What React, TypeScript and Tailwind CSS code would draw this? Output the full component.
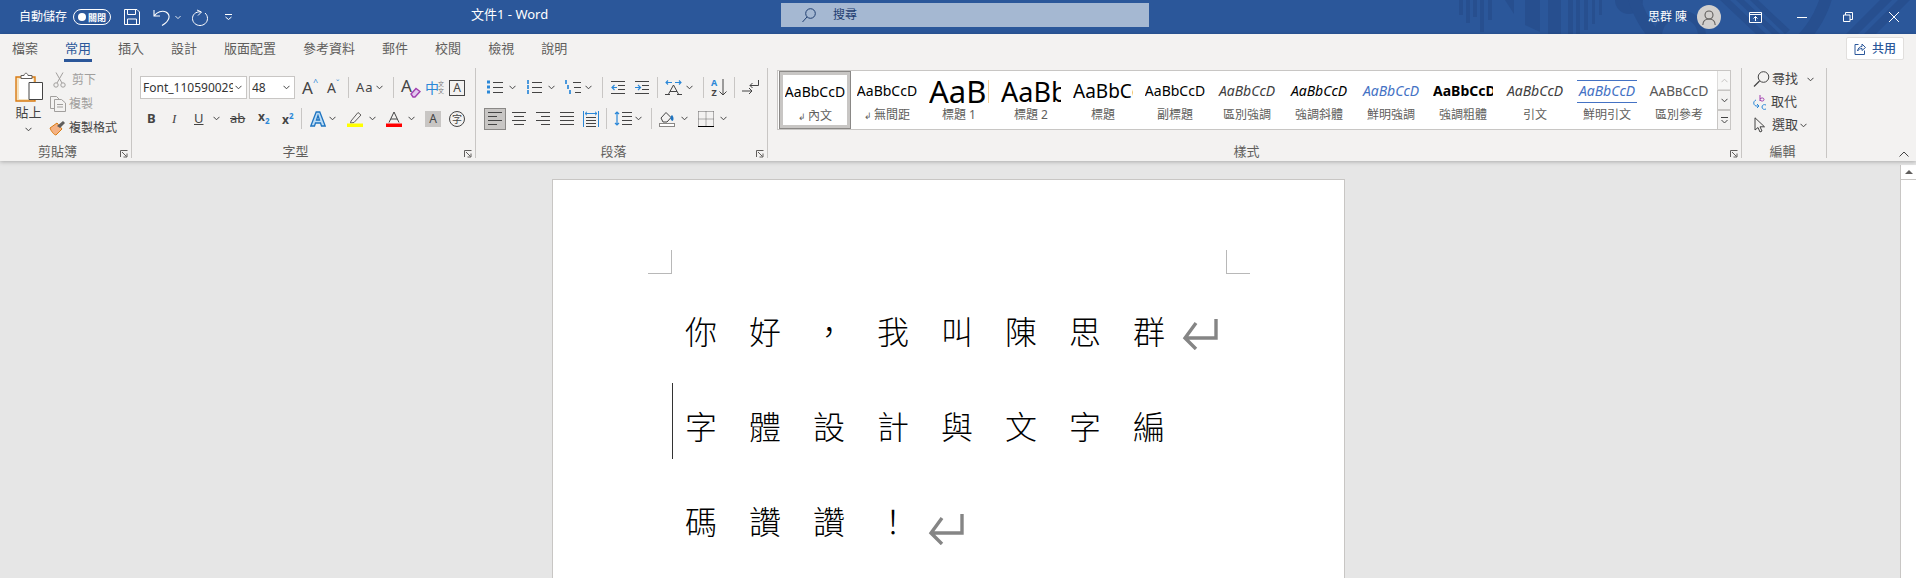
import React from "react";

const blue = "#2b88d8";
const ink = "#444444";

function Chev({ className = "", color = ink }: { className?: string; color?: string }) {
  return (
    <svg width="7" height="5" viewBox="0 0 7 5" className={`shrink-0 ${className}`}>
      <path d="M0.5 0.8 L3.5 3.8 L6.5 0.8" fill="none" stroke={color} strokeWidth="1" />
    </svg>
  );
}

function Sep({ className = "" }: { className?: string }) {
  return <div className={`w-px h-[21px] bg-[#c8c6c4] shrink-0 ${className}`} />;
}

function Launcher() {
  return (
    <svg width="8" height="8" viewBox="0 0 8 8" className="shrink-0">
      <path d="M0.5 7 V0.5 H7.5 M2 2 L6.5 6.5 M3.5 7 H7 V3.5" fill="none" stroke="#605e5c" strokeWidth="1" />
    </svg>
  );
}

function GroupLabel({ text, launcher = true }: { text: string; launcher?: boolean }) {
  return (
    <div className="mt-auto flex items-end h-[14px] pr-[3px]">
      <div className="flex-1 text-center text-[13px] leading-[14px] text-[#605e5c]">{text}</div>
      {launcher && <div className="w-[13px] flex justify-end"><Launcher /></div>}
    </div>
  );
}

function Lines({ rows, className = "" }: { rows: [number, number][]; className?: string }) {
  return (
    <svg width="14" height="15" viewBox="0 0 14 15" className={`shrink-0 ${className}`}>
      {rows.map(([x, w], i) => (
        <rect key={i} x={x} y={1 + i * 4} width={w} height="1" fill={ink} />
      ))}
    </svg>
  );
}

function ReturnArrow({ className = "" }: { className?: string }) {
  return (
    <svg width="36" height="31" viewBox="0 0 36 31" className={`shrink-0 ${className}`}>
      <path d="M34 0 V19 H3 M14 4 L3 19 L14 30" fill="none" stroke="#858585" strokeWidth="3.4" />
    </svg>
  );
}

function TitleDecoration() {
  return (
    <svg width="476" height="34" viewBox="0 0 476 34" className="absolute right-0 top-0">
      <g fill="#274f8f">
        <rect x="19" y="0" width="4" height="15" />
        <rect x="26" y="0" width="4" height="23" />
        <rect x="33" y="0" width="4" height="17" />
        <rect x="40" y="0" width="4" height="32" />
        <rect x="48" y="0" width="4" height="20" />
        <path d="M65 0 H74 V14 Z" />
        <path d="M85 0 H100 V32 L85 25 Z" />
        <rect x="108" y="0" width="13" height="34" />
        <rect x="128" y="0" width="5" height="34" />
        <rect x="136" y="0" width="4" height="34" />
        <rect x="144" y="0" width="4" height="30" />
        <rect x="152" y="0" width="3" height="24" />
        <rect x="159" y="0" width="3" height="15" />
        <circle cx="189" cy="0" r="14" />
        <path d="M290 0 L326 34 H316 L280 0 Z M304 0 L340 34 H332 L296 0 Z M318 0 L350 30 L345 34 L310 0 Z" />
        <path d="M440 0 H452 L418 34 H406 Z M458 0 H470 L436 34 H424 Z" />
      </g>
      <circle cx="240" cy="36" r="22" fill="none" stroke="#274f8f" strokeWidth="8" />
      <circle cx="290" cy="-30" r="100" fill="none" stroke="#274f8f" strokeWidth="12" />
    </svg>
  );
}

function TitleBar() {
  return (
    <div className="relative h-[34px] bg-[#2b579a] flex items-center pl-[19px] pr-[17px] text-white overflow-hidden">
      <TitleDecoration />
      <span className="text-[12px] w-[48px] shrink-0 whitespace-nowrap">自動儲存</span>
      <div className="ml-[6px] w-[38px] h-[16px] rounded-full border border-white flex items-center pl-[4px] gap-[2px]">
        <div className="w-[8px] h-[8px] rounded-full bg-white" />
        <span className="text-[9px] leading-none font-bold whitespace-nowrap">關閉</span>
      </div>
      <svg width="16" height="16" viewBox="0 0 16 16" className="ml-[13px] shrink-0">
        <path d="M0.5 0.5 H13 L15.5 3 V15.5 H0.5 Z M3.5 0.5 V5.5 H11.5 V0.5 M3.5 15.5 V10 H12.5 V15.5" fill="none" stroke="white" />
      </svg>
      <svg width="19" height="17" viewBox="0 0 19 17" className="ml-[13px] shrink-0">
        <path d="M1 1 V7 H7 M1 7 C4 3 9 1 13 3 C18 6 17 12 9 16.5" fill="none" stroke="white" strokeWidth="1.1" />
      </svg>
      <Chev className="ml-[3px] w-[6px]" color="white" />
      <svg width="16" height="17" viewBox="0 0 16 17" className="ml-[11px] shrink-0">
        <path d="M5 1 L9.5 3 L6 6.5 M9 2.8 C3 2.5 0.5 6 0.5 9.5 C0.5 13.5 4 16.5 8 16.5 C12 16.5 15.5 13.5 15.5 9.5 C15.5 7 14.5 5.5 13 4" fill="none" stroke="white" strokeWidth="1" />
      </svg>
      <svg width="7" height="6" viewBox="0 0 7 6" className="ml-[17px] shrink-0">
        <path d="M0 0.5 H7 M0.5 3 L3.5 5.5 L6.5 3" fill="none" stroke="white" />
      </svg>
      <span className="ml-[239px] w-[78px] shrink-0 text-[13px] whitespace-nowrap relative -top-[2px]">文件1 - Word</span>
      <div className="ml-[232px] w-[368px] h-[24px] bg-[#a5b8d2] flex items-center pl-[21px] text-[#1f3e70] shrink-0 relative -top-[2px]">
        <svg width="14" height="15" viewBox="0 0 14 15">
          <circle cx="8.5" cy="5.5" r="4.8" fill="none" stroke="#1f3e70" />
          <path d="M5 9 L0.5 14" stroke="#1f3e70" />
        </svg>
        <span className="ml-[17px] text-[12px]">搜尋</span>
      </div>
      <div className="ml-auto flex items-center relative">
        <span className="text-[12px] whitespace-nowrap w-[38px]">思群 陳</span>
        <div className="ml-[11px] w-[24px] h-[24px] rounded-full bg-[#d2d0ce] flex items-center justify-center">
          <svg width="14" height="15" viewBox="0 0 14 15">
            <circle cx="7" cy="5" r="4" fill="none" stroke="#605e5c" strokeWidth="1.1" />
            <path d="M0.8 15 C1 10.5 4 9 7 9 C10 9 13 10.5 13.2 15" fill="none" stroke="#605e5c" strokeWidth="1.1" />
          </svg>
        </div>
        <svg width="13" height="11" viewBox="0 0 13 11" className="ml-[28px]">
          <path d="M0.5 0.5 H12.5 V10.5 H0.5 Z M0.5 2.5 H12.5 M6.5 9 V4.5 M4.5 6.5 L6.5 4.5 L8.5 6.5" fill="none" stroke="white" />
        </svg>
        <div className="ml-[35px] w-[10px] h-px bg-white" />
        <svg width="10" height="10" viewBox="0 0 10 10" className="ml-[36px]">
          <path d="M0.5 3 H7 V9.5 H0.5 Z M2.5 3 V0.5 H9.5 V7.5 H7" fill="none" stroke="white" />
        </svg>
        <svg width="10" height="10" viewBox="0 0 10 10" className="ml-[36px]">
          <path d="M0 0 L10 10 M10 0 L0 10" stroke="white" />
        </svg>
      </div>
    </div>
  );
}

function Tabs() {
  const tabs = ["檔案", "常用", "插入", "設計", "版面配置", "參考資料", "郵件", "校閱", "檢視", "說明"];
  return (
    <div className="h-[28px] flex items-start pl-3 pr-3">
      <div className="flex gap-[27px] h-full">
        {tabs.map((t) => (
          <div key={t} className={`relative text-[13px] leading-[28px] w-fit whitespace-nowrap ${t === "常用" ? "text-[#2b579a]" : "text-[#605e5c]"}`}>
            {t}
            {t === "常用" && <div className="absolute left-[-1px] right-[-1px] top-[25px] h-[3px] bg-[#2b579a]" />}
          </div>
        ))}
      </div>
      <div className="ml-auto mt-[3px] w-[58px] h-[23px] bg-white border border-[#e1dfdd] rounded-[2px] flex items-center justify-center gap-[6px] text-[#2b579a]">
        <svg width="12" height="12" viewBox="0 0 12 12">
          <path d="M4.5 1.5 H1 V11.5 H10.5 V7.5 M3.5 8 C4 5 6 3.5 8 3.5 V1 L11.5 4.5 L8 7.5 V5.5 C6 5.5 4.5 6.5 3.5 8 Z" fill="none" stroke="#2b579a" />
        </svg>
        <span className="text-[12px] font-medium whitespace-nowrap">共用</span>
      </div>
    </div>
  );
}

function ClipboardGroup() {
  return (
    <div className="w-[132px] shrink-0 border-r border-[#c8c6c4] flex flex-col">
      <div className="flex pl-[15px] pt-[4px]">
        <div className="w-[27px] flex flex-col items-center">
          <svg width="28" height="34" viewBox="0 0 28 34">
            <path d="M1 5 H20 V29 H1 Z" fill="#f5e2bf" stroke="#d97b12" strokeWidth="1.4" />
            <path d="M4 7 H18 V27 H4 Z" fill="white" />
            <path d="M6 6.5 V3.5 H9 C9.5 0.5 12.5 0.5 13 3.5 H17 V6.5 Z" fill="white" stroke="#605e5c" />
            <path d="M14 10.5 H27.5 V27.5 H14 Z" fill="white" stroke="#444" strokeWidth="1" />
          </svg>
          <span className="text-[13px] leading-[14px] -mt-[1px] text-[#444] whitespace-nowrap">貼上</span>
          <Chev className="mt-[8px]" />
        </div>
        <div className="ml-[8px] flex flex-col text-[12px] gap-[4px] mt-[-2px]">
          <div className="h-[20px] flex items-center text-[#a19f9d]">
            <svg width="13" height="16" viewBox="0 0 13 16" className="ml-[3px]">
              <path d="M3 0.5 L9 11 M10 0.5 L4 11" stroke="#a19f9d" fill="none" />
              <circle cx="3" cy="13" r="2.2" fill="none" stroke="#a19f9d" />
              <circle cx="10" cy="13" r="2.2" fill="none" stroke="#a19f9d" />
            </svg>
            <span className="ml-[6px]">剪下</span>
          </div>
          <div className="h-[20px] flex items-center text-[#a19f9d]">
            <svg width="16" height="16" viewBox="0 0 16 16">
              <path d="M5 12.5 H0.5 V0.5 H6.5 L9 3" fill="none" stroke="#a19f9d" />
              <path d="M4.5 3.5 H11.5 L15.5 7 V15.5 H4.5 Z M7 8.5 H13 M7 11 H13" fill="none" stroke="#a19f9d" />
            </svg>
            <span className="ml-[3px]">複製</span>
          </div>
          <div className="h-[20px] flex items-center text-[#444] -ml-[1px]">
            <svg width="17" height="16" viewBox="0 0 17 16">
              <path d="M1 8 L8 3 L13 9 L7 15 C5 15 2 11 1 8 Z" fill="#f4b183" stroke="#d97b12" />
              <path d="M8 6 L14 1 L16 3 L11 8 Z" fill="#605e5c" />
            </svg>
            <span className="ml-[3px] whitespace-nowrap">複製格式</span>
          </div>
        </div>
      </div>
      <GroupLabel text="剪貼簿" />
    </div>
  );
}

function SelectBox({ text, width }: { text: string; width: string }) {
  return (
    <div className={`${width} h-[23px] shrink-0 bg-white border border-[#c8c6c4] flex items-center pl-[2px] pr-[4px]`}>
      <span className="flex-1 min-w-0 overflow-hidden whitespace-nowrap text-[12px] text-[#333]">{text}</span>
      <Chev className="ml-[2px]" />
    </div>
  );
}

function FontGroup() {
  return (
    <div className="w-[344px] shrink-0 border-r border-[#c8c6c4] flex flex-col">
      <div className="flex items-center h-[23px] mt-[8px]">
        <div className="ml-[8px]"><SelectBox text="Font_110590029" width="w-[107px]" /></div>
        <div className="ml-[2px]"><SelectBox text="48" width="w-[46px]" /></div>
        <div className="ml-[7px] w-[16px] text-[17px] leading-none text-[#444] relative whitespace-nowrap">A<span className="absolute left-[11px] top-[-2px] text-[9px] text-[#2b88d8]">^</span></div>
        <div className="ml-[9px] w-[15px] text-[14px] leading-none text-[#444] relative whitespace-nowrap">A<span className="absolute left-[9px] top-[-1px] text-[8px] text-[#2b88d8]">ˇ</span></div>
        <Sep className="ml-[6px]" />
        <span className="ml-[7px] text-[13px] leading-none text-[#444] w-[18px] tracking-[1px]">Aa</span>
        <Chev className="ml-[2px]" />
        <Sep className="ml-[10px]" />
        <div className="ml-[7px] w-[20px] h-[21px] relative text-[17px] leading-none text-[#444]">
          A
          <svg width="11" height="11" viewBox="0 0 11 11" className="absolute right-0 bottom-0">
            <path d="M1 7 L6 1.5 L10 4.5 L5 10 H3 Z" fill="#e3c8ef" stroke="#a23fb0" strokeWidth="1.4" />
          </svg>
        </div>
        <div className="ml-[4px] w-[18px] flex items-center text-[14px] leading-none text-[#2b88d8] whitespace-nowrap">
          中<span className="flex flex-col text-[6px] leading-[7px] text-[#777] -ml-[1px]"><span>文</span><span>文</span></span>
        </div>
        <div className="ml-[6px] w-[16px] h-[16px] border border-[#444] flex items-center justify-center text-[12px] leading-none text-[#444]">A</div>
      </div>
      <div className="flex items-center h-[23px] mt-[8px]">
        <span className="ml-[15px] w-[8px] text-[13px] font-bold text-[#444] leading-none">B</span>
        <span className="ml-[17px] w-[8px] text-[13px] italic text-[#444] leading-none font-['Liberation_Serif',serif]">I</span>
        <span className="ml-[14px] w-[9px] text-[13px] underline text-[#444] leading-none">U</span>
        <Chev className="ml-[10px]" />
        <span className="ml-[10px] w-[16px] text-[13px] line-through text-[#444] leading-none">ab</span>
        <span className="ml-[12px] w-[12px] text-[12px] font-bold text-[#444] leading-none whitespace-nowrap">x<span className="text-[8px] align-sub text-[#2b88d8]">2</span></span>
        <span className="ml-[12px] w-[12px] text-[12px] font-bold text-[#444] leading-none whitespace-nowrap">x<span className="text-[8px] align-super text-[#2b88d8]">2</span></span>
        <Sep className="ml-[7px]" />
        <svg width="16" height="16" viewBox="0 0 16 16" className="ml-[8px] shrink-0">
          <path d="M0.8 15 L6.2 1 H9.8 L15.2 15 H11.5 L10.5 12 H5.5 L4.5 15 Z M6.5 9 H9.5 L8 4.5 Z" fill="#bcdcf5" stroke="#1e74c0" strokeWidth="1.3" />
        </svg>
        <Chev className="ml-[3px]" />
        <svg width="16" height="16" viewBox="0 0 16 16" className="ml-[11px] shrink-0">
          <path d="M4 10 L11 1.5 L14 4 L7 11.5 L3.5 12 Z" fill="none" stroke="#605e5c" />
          <rect x="0" y="12.5" width="16" height="3.5" fill="#ffff00" />
        </svg>
        <Chev className="ml-[6px]" />
        <svg width="16" height="16" viewBox="0 0 16 16" className="ml-[10px] shrink-0">
          <path d="M3 11.5 L8 1 L13 11.5 M5 8 H11" fill="none" stroke="#444" />
          <rect x="0" y="12.5" width="16" height="3.5" fill="#ff0000" />
        </svg>
        <Chev className="ml-[6px]" />
        <div className="ml-[10px] w-[16px] h-[16px] bg-[#c8c6c4] flex items-center justify-center text-[12px] leading-none text-[#444]">A</div>
        <div className="ml-[8px] w-[16px] h-[16px] rounded-full border border-[#444] flex items-center justify-center text-[10px] leading-none text-[#444]">字</div>
      </div>
      <GroupLabel text="字型" />
    </div>
  );
}

function ListIcon({ kind, className = "" }: { kind: "bullet" | "number" | "multi"; className?: string }) {
  const x = kind === "multi" ? 8 : 6;
  return (
    <svg width="16" height="15" viewBox="0 0 16 15" className={`shrink-0 ${className}`}>
      {[2, 7, 12].map((y, i) => (
        <g key={y}>
          {kind === "bullet" && <rect x="0" y={y - 1.5} width="3" height="3" fill={blue} />}
          {kind !== "bullet" && <rect x={kind === "multi" ? i * 2 : 1} y={y - 2} width="2" height="4" fill={blue} opacity="0.85" />}
          <rect x={kind === "multi" ? x + i * 1 : x} y={y} width={kind === "multi" ? 8 - i : 10} height="1" fill={ink} />
        </g>
      ))}
    </svg>
  );
}

function IndentIcon({ flip, className = "" }: { flip?: boolean; className?: string }) {
  return (
    <svg width="14" height="14" viewBox="0 0 14 14" className={`shrink-0 ${className}`}>
      <path d="M0 0.5 H14 M7 4.5 H14 M7 8.5 H14 M0 12.5 H14" stroke={ink} />
      <path d={flip ? "M0 6.5 H5 M3 4 L5.5 6.5 L3 9" : "M6 6.5 H1 M3.5 4 L1 6.5 L3.5 9"} fill="none" stroke={blue} strokeWidth="1.2" />
    </svg>
  );
}

function ParagraphGroup() {
  return (
    <div className="w-[292px] shrink-0 border-r border-[#c8c6c4] flex flex-col">
      <div className="flex items-center h-[23px] mt-[8px]">
        <ListIcon kind="bullet" className="ml-[11px]" />
        <Chev className="ml-[6px]" />
        <ListIcon kind="number" className="ml-[10px]" />
        <Chev className="ml-[6px]" />
        <ListIcon kind="multi" className="ml-[10px]" />
        <Chev className="ml-[4px]" />
        <Sep className="ml-[10px]" />
        <IndentIcon className="ml-[8px]" />
        <IndentIcon flip className="ml-[10px]" />
        <Sep className="ml-[8px]" />
        <svg width="17" height="16" viewBox="0 0 17 16" className="ml-[7px] shrink-0">
          <path d="M3 15 L8.5 5 L14 15 M5 11.5 H12 M0 14.5 H5 M12 14.5 H17" fill="none" stroke={ink} />
          <path d="M1 2.5 H7 M3 0.5 L1 2.5 L3 4.5 M10 2.5 H16 M14 0.5 L16 2.5 L14 4.5" fill="none" stroke={blue} strokeWidth="1.1" />
        </svg>
        <Chev className="ml-[4px]" />
        <Sep className="ml-[10px]" />
        <div className="ml-[6px] w-[17px] h-[18px] flex items-center">
          <div className="flex flex-col gap-[1px] text-[9px] leading-[9px] font-bold w-[8px] items-center">
            <span className="text-[#2b88d8]">A</span>
            <span className="text-[#444]">Z</span>
          </div>
          <svg width="8" height="17" viewBox="0 0 8 17" className="ml-[1px]">
            <path d="M4 0 V16 M0.5 12.5 L4 16 L7.5 12.5" fill="none" stroke={ink} />
          </svg>
        </div>
        <Sep className="ml-[7px]" />
        <svg width="17" height="15" viewBox="0 0 17 15" className="ml-[7px] shrink-0">
          <path d="M0 11 H10 M7 8 L10 11 L7 14" fill="none" stroke={ink} />
          <path d="M16.5 0 V5.5 H8 M10.5 3 L8 5.5 L10.5 8" fill="none" stroke={ink} />
        </svg>
      </div>
      <div className="flex items-center h-[23px] mt-[8px]">
        <div className="ml-[8px] w-[22px] h-[22px] bg-[#c8c6c4] border border-[#8a8886] flex items-center justify-center">
          <Lines rows={[[0, 14], [0, 9], [0, 14], [0, 9]]} />
        </div>
        <Lines className="ml-[6px]" rows={[[0, 14], [2, 10], [0, 14], [2, 10]]} />
        <Lines className="ml-[10px]" rows={[[0, 14], [5, 9], [0, 14], [5, 9]]} />
        <Lines className="ml-[10px]" rows={[[0, 14], [0, 14], [0, 14], [0, 14]]} />
        <svg width="16" height="16" viewBox="0 0 16 16" className="ml-[9px] shrink-0">
          <path d="M0.5 0 V16 M15.5 0 V16 M2 2.5 H14 M4 0.8 L2 2.5 L4 4.2 M12 0.8 L14 2.5 L12 4.2" fill="none" stroke={blue} />
          <path d="M3 6.5 H13 M3 9.5 H13 M3 12.5 H13 M3 15.5 H13" stroke={ink} />
        </svg>
        <Sep className="ml-[7px]" />
        <svg width="18" height="15" viewBox="0 0 18 15" className="ml-[7px] shrink-0">
          <path d="M3 1 V14 M1 3 L3 1 L5 3 M1 12 L3 14 L5 12" fill="none" stroke={blue} strokeWidth="1.2" />
          <path d="M8 1.5 H18 M8 5.5 H18 M8 9.5 H18 M8 13.5 H18" stroke={ink} />
        </svg>
        <Chev className="ml-[3px]" />
        <Sep className="ml-[9px]" />
        <svg width="16" height="16" viewBox="0 0 16 16" className="ml-[7px] shrink-0">
          <path d="M2 7 L7 1.5 L12 6.5 L8 11 H4 Z" fill="none" stroke={ink} />
          <path d="M13 4 C12 5 11 6 11.5 8 L13 10 C15 9.5 15 6 13 4 Z" fill="#1e74c0" />
          <rect x="0.5" y="12.5" width="15" height="3" fill="#ffffff" stroke="#8a8886" />
        </svg>
        <Chev className="ml-[6px]" />
        <svg width="16" height="16" viewBox="0 0 16 16" className="ml-[10px] shrink-0">
          <path d="M0.5 0.5 H16 M0.5 0.5 V15 M15.5 0.5 V15 M8 0.5 V15 M0.5 8 H16" fill="none" stroke="#666" strokeDasharray="1 1" />
          <path d="M0 15.5 H16" stroke="#000" />
        </svg>
        <Chev className="ml-[6px]" />
      </div>
      <GroupLabel text="段落" />
    </div>
  );
}

const styles = [
  { sample: "AaBbCcD", label: "內文", mark: true, cls: "h-[23px] text-[14px] text-black" },
  { sample: "AaBbCcD", label: "無間距", mark: true, cls: "h-[23px] text-[14px] text-black" },
  { sample: "AaBb", label: "標題 1", cls: "h-[31px] text-[31px] text-black justify-start" },
  { sample: "AaBbC", label: "標題 2", cls: "h-[27px] text-[27px] text-black justify-start" },
  { sample: "AaBbCc", label: "標題", cls: "h-[23px] text-[19px] text-black justify-start" },
  { sample: "AaBbCcD", label: "副標題", cls: "h-[23px] text-[14px] text-black" },
  { sample: "AaBbCcD", label: "區別強調", cls: "h-[23px] text-[14px] italic text-[#404040]" },
  { sample: "AaBbCcD", label: "強調斜體", cls: "h-[23px] text-[14px] italic text-black" },
  { sample: "AaBbCcD", label: "鮮明強調", cls: "h-[23px] text-[14px] italic text-[#4472c4]" },
  { sample: "AaBbCcD", label: "強調粗體", cls: "h-[23px] text-[14px] font-bold text-black justify-start" },
  { sample: "AaBbCcD", label: "引文", cls: "h-[23px] text-[14px] italic text-[#404040]" },
  { sample: "AaBbCcD", label: "鮮明引文", quote: true, cls: "h-[23px] text-[14px] italic text-[#4472c4]" },
  { sample: "AaBbCcD", label: "區別參考", cls: "h-[23px] text-[14px] text-[#5a5a5a] [font-variant:small-caps]" },
];

function StyleCell({ item, selected }: { item: (typeof styles)[number]; selected: boolean }) {
  return (
    <div className={`w-[72px] h-full shrink-0 flex flex-col items-center bg-white ${selected ? "border border-[#8a8886] outline-[3px] outline-[#c8c6c4] -outline-offset-4" : ""}`}>
      <div className="h-[38px] w-full flex items-center justify-center pt-[2px]">
        <div className={`w-[60px] overflow-hidden flex items-center justify-center whitespace-nowrap leading-none ${item.quote ? "border-y border-[#4472c4]" : ""} ${item.cls}`}>
          {item.sample}
        </div>
      </div>
      <div className="text-[12px] leading-[14px] -mt-[1px] text-[#605e5c] whitespace-nowrap">
        {item.mark && <span className="text-[9px] mr-[2px]">↲</span>}
        {item.label}
      </div>
    </div>
  );
}

function SpinButton({ children, top }: { children: React.ReactNode; top?: boolean }) {
  return (
    <div className={`flex-1 w-[14px] flex items-center justify-center bg-[#f3f2f1] border border-[#c8c6c4] ${top ? "opacity-60" : ""}`}>
      {children}
    </div>
  );
}

function StylesGroup() {
  return (
    <div className="w-[974px] shrink-0 border-r border-[#c8c6c4] flex flex-col">
      <div className="ml-[9px] mt-[2px] w-[954px] h-[60px] flex border border-[#c8c6c4] bg-white">
        <div className="flex flex-1 items-stretch pl-[1px]">
          {styles.map((s, i) => (
            <StyleCell key={s.label} item={s} selected={i === 0} />
          ))}
        </div>
        <div className="flex flex-col w-[14px] shrink-0 -my-px -mr-px">
          <SpinButton top><Chev color="#a19f9d" className="rotate-180" /></SpinButton>
          <SpinButton><Chev /></SpinButton>
          <SpinButton>
            <svg width="7" height="7" viewBox="0 0 7 7"><path d="M0 0.5 H7 M0.5 3 L3.5 6 L6.5 3" fill="none" stroke={ink} /></svg>
          </SpinButton>
        </div>
      </div>
      <GroupLabel text="樣式" />
    </div>
  );
}

function EditGroup() {
  return (
    <div className="w-[85px] shrink-0 border-r border-[#c8c6c4] flex flex-col">
      <div className="flex flex-col text-[13px] text-[#444] pl-[11px] mt-[1px] gap-[3px]">
        <div className="h-[20px] flex items-center whitespace-nowrap">
          <svg width="17" height="16" viewBox="0 0 17 16"><circle cx="10.5" cy="6" r="5.3" fill="none" stroke={ink} /><path d="M6.5 10 L1 15.5" stroke={ink} strokeWidth="1.2" /></svg>
          <span className="ml-[2px]">尋找</span>
          <Chev className="ml-[9px]" />
        </div>
        <div className="h-[20px] flex items-center whitespace-nowrap">
          <svg width="15" height="16" viewBox="0 0 15 16" className="-ml-[1px]">
            <path d="M4 6 C1 7 1 11 4 12 H7 M5 10 L7 12 L5 14" fill="none" stroke={blue} />
            <path d="M8 1 V7 M8 5 C9 3.5 12 3.5 12 5.5 C12 7.5 9 7.5 8 6" fill="none" stroke="#a23fb0" />
            <path d="M14 11 C12 10 10 11 10 13 C10 15 12 16 14 15" fill="none" stroke={blue} />
          </svg>
          <span className="ml-[4px]">取代</span>
        </div>
        <div className="h-[20px] flex items-center whitespace-nowrap">
          <svg width="12" height="16" viewBox="0 0 12 16" className="ml-[1px]">
            <path d="M1 0.8 V13 L4 10.5 L6 15 L8 14 L6 9.8 H10.5 Z" fill="none" stroke={ink} />
          </svg>
          <span className="ml-[6px]">選取</span>
          <Chev className="ml-[2px]" />
        </div>
      </div>
      <GroupLabel text="編輯" launcher={false} />
    </div>
  );
}

function Ribbon() {
  return (
    <div className="relative z-10 h-[127px] bg-[#f3f2f1] shadow-[0_1px_4px_rgba(0,0,0,0.25)]">
      <Tabs />
      <div className="flex h-[90px] mt-[6px]">
        <ClipboardGroup />
        <FontGroup />
        <ParagraphGroup />
        <StylesGroup />
        <EditGroup />
      </div>
      <svg width="10" height="6" viewBox="0 0 10 6" className="absolute right-[7px] top-[117px]">
        <path d="M0.5 5.5 L5 1 L9.5 5.5" fill="none" stroke={ink} />
      </svg>
    </div>
  );
}

function Scrollbar() {
  return (
    <div className="w-[16px] shrink-0 flex flex-col border-l border-[#c8c6c4] bg-white mt-[4px]">
      <div className="h-[15px] flex items-center justify-center border-b border-[#c8c6c4]">
        <div className="w-0 h-0 border-x-[4px] border-x-transparent border-b-[4px] border-b-[#605e5c]" />
      </div>
    </div>
  );
}

function HandLine({ chars, cursor, children }: { chars: string[]; cursor?: boolean; children?: React.ReactNode }) {
  return (
    <div className="relative flex items-center h-[95px]">
      {cursor && <div className="absolute left-[3px] top-[6px] w-px h-[76px] bg-[#333]" />}
      {chars.map((c, i) => (
        <span key={i} className="w-[64px] text-center text-[32px] leading-none font-light text-black">{c}</span>
      ))}
      {children}
    </div>
  );
}

function Page() {
  return (
    <div className="relative ml-[552px] w-[793px] h-[500px] bg-white border border-[#c8c6c4] pl-[116px] pt-[102px] font-['Noto_Sans_CJK_TC',sans-serif]">
      <div className="absolute left-[95px] top-[70px] w-[24px] h-[24px] border-r border-b border-[#b8b8b8]" />
      <div className="absolute left-[673px] top-[70px] w-[24px] h-[24px] border-l border-b border-[#b8b8b8]" />
      <HandLine chars={[..."你好，我叫陳思群"]}><ReturnArrow className="ml-[1px] mt-[10px]" /></HandLine>
      <HandLine chars={[..."字體設計與文字編"]} cursor />
      <HandLine chars={[..."碼讚讚！"]}><ReturnArrow className="ml-[3px] mt-[20px]" /></HandLine>
    </div>
  );
}

export default function App() {
  return (
    <div className="w-[1916px] h-[578px] overflow-hidden bg-[#e6e6e6] flex flex-col font-['Noto_Sans','Noto_Sans_CJK_TC',sans-serif]">
      <TitleBar />
      <Ribbon />
      <div className="flex flex-1 min-h-0">
        <div className="flex-1 pt-[18px] overflow-hidden">
          <Page />
        </div>
        <Scrollbar />
      </div>
    </div>
  );
}
